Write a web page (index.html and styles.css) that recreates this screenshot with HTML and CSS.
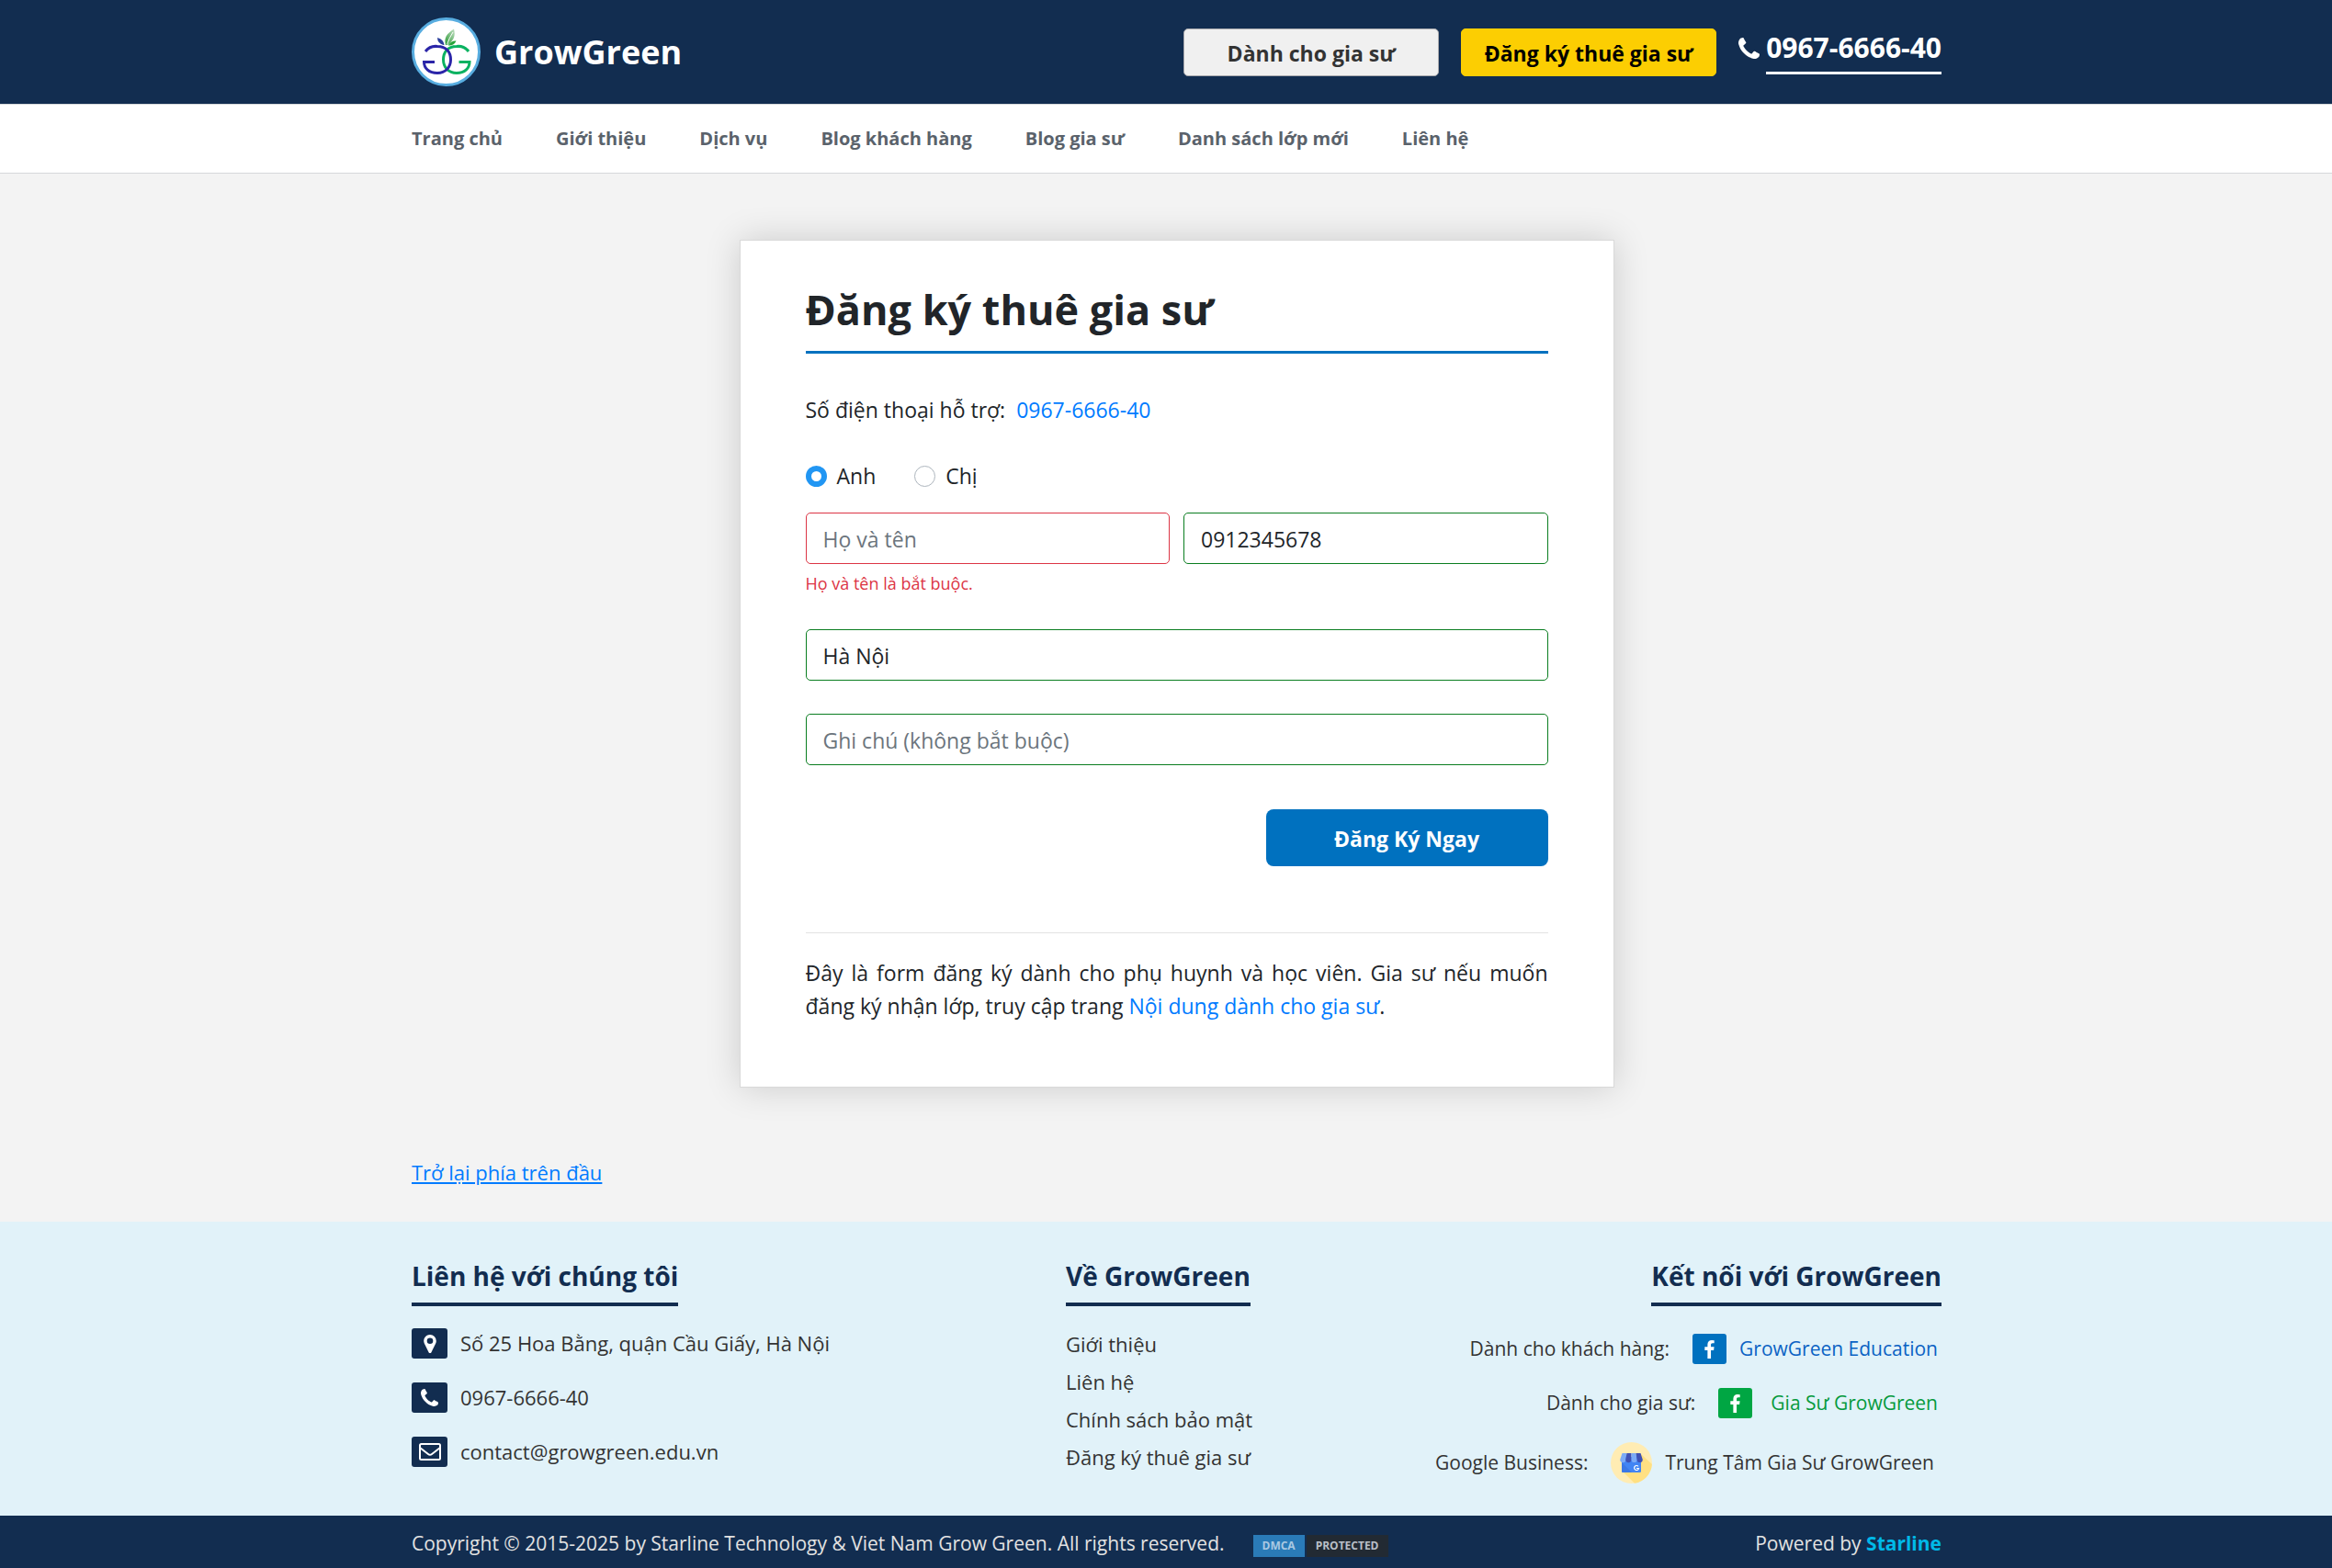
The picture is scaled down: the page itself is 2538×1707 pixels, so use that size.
FILE: index.html
```html
<!DOCTYPE html>
<html lang="vi">
<head>
<meta charset="utf-8">
<meta name="viewport" content="width=device-width, initial-scale=1">
<title>Đăng ký thuê gia sư - GrowGreen</title>
<link rel="stylesheet" href="styles.css">
</head>
<body id="top">
<svg class="sprite" aria-hidden="true">
  <symbol id="i-phone" viewBox="0 0 1408 1408"><path d="M1408 1112q0 27-10 70.500t-21 68.500q-21 50-122 106-94 51-186 51-27 0-53-3.500t-57.500-12.500-47-14.500-55.500-20.500-49-18q-98-35-175-83-127-79-264-216t-216-264q-48-77-83-175-3-9-18-49t-20.500-55.500-14.500-47-12.500-57.500-3.500-53q0-92 51-186 56-101 106-122 25-11 68.500-21t70.500-10q14 0 21 3 18 6 53 76 11 19 30 54t35 63.500 31 53.500q3 4 17.500 25t21.500 35.500 7 28.500q0 20-28.500 50t-62 55-62 53-28.500 46q0 9 5 22.500t8.500 20.500 14 24 11.500 19q76 137 174 235t235 174q2 1 19 11.500t24 14 20.500 8.500 22.500 5q18 0 46-28.500t53-62 55-62 50-28.500q14 0 28.500 7t35.500 21.500 25 17.500q25 15 53.500 31t63.500 35 54 30q70 35 76 53 3 7 3 21z"/></symbol>
  <symbol id="i-fb" viewBox="0 0 864 1664"><path d="M864 12v264H707q-86 0-116 36t-30 108v189h293l-39 296H561v759H255V905H0V609h255V391q0-186 104-288.500T636 0q147 0 228 12z"/></symbol>
</svg>

<header class="topbar">
  <div class="container topbar-row">
    <a class="brand" href="#">
      <svg class="logo" viewBox="0 0 75 75" aria-hidden="true">
        <defs><linearGradient id="leaf" x1="0" y1="1" x2="1" y2="0"><stop offset="0" stop-color="#2a9a35"/><stop offset="1" stop-color="#c4dfc5"/></linearGradient></defs>
        <circle cx="37.500" cy="37.500" r="36" fill="#fff" stroke="#58ade0" stroke-width="3"/>
        <g fill="none" stroke-width="3">
          <path d="M62 37A14.500 15 0 0 0 49 31.500C39 31.500 34.500 38 34.500 46S40 60.500 49 60.500C57.500 60.500 63 55.500 63 48.500H51.500" stroke="#0bb261"/>
          <path d="M15 37A14.500 15 0 0 1 28 31.500C38 31.500 42.500 38 42.500 46S37 60.500 28 60.500C19 60.500 13.500 55.500 13.500 48.500H25" stroke="#2b25a8"/>
        </g>
        <path d="M37 30C35 22 38 18 46 12.500C48 20 46 25 39 30Z" fill="url(#leaf)"/>
        <path d="M38.500 29.500Q41 22 45 16" fill="none" stroke="#fff"/>
        <path d="M34.500 30Q28 28 28 22Q35 24 35.500 30Z" fill="#2b3f9c"/>
        <path d="M40 30Q43 25 48.500 25.500Q46 31 40 30.500Z" fill="#27a43a"/>
      </svg>
      <span>GrowGreen</span>
    </a>
    <div class="actions">
      <a class="btn btn-light" href="#">Dành cho gia sư</a>
      <a class="btn btn-yellow" href="#">Đăng ký thuê gia sư</a>
      <div class="hotline">
        <svg class="hotline-icon" aria-hidden="true"><use href="#i-phone"/></svg>
        <a href="tel:0967666640">0967-6666-40</a>
      </div>
    </div>
  </div>
</header>

<nav class="mainnav" aria-label="Menu chính">
  <div class="container">
    <ul>
      <li><a href="#">Trang chủ</a></li>
      <li><a href="#">Giới thiệu</a></li>
      <li><a href="#">Dịch vụ</a></li>
      <li><a href="#">Blog khách hàng</a></li>
      <li><a href="#">Blog gia sư</a></li>
      <li><a href="#">Danh sách lớp mới</a></li>
      <li><a href="#">Liên hệ</a></li>
    </ul>
  </div>
</nav>

<main>
  <div class="container">
    <section class="card">
      <h1>Đăng ký thuê gia sư</h1>
      <p class="support">Số điện thoại hỗ trợ: <a href="tel:0967666640">0967-6666-40</a></p>
      <form novalidate>
        <div class="radios">
          <label><input type="radio" name="title" value="anh" checked> Anh</label>
          <label><input type="radio" name="title" value="chi"> Chị</label>
        </div>
        <div class="pair">
          <div>
            <input class="field invalid" type="text" placeholder="Họ và tên" aria-label="Họ và tên" aria-describedby="name-error">
            <p class="error" id="name-error">Họ và tên là bắt buộc.</p>
          </div>
          <div>
            <input class="field" type="tel" value="0912345678" aria-label="Số điện thoại">
          </div>
        </div>
        <input class="field" type="text" value="Hà Nội" aria-label="Địa chỉ">
        <input class="field" type="text" placeholder="Ghi chú (không bắt buộc)" aria-label="Ghi chú">
        <button class="submit" type="submit">Đăng Ký Ngay</button>
      </form>
      <p class="note">Đây là form đăng ký dành cho phụ huynh và học viên. Gia sư nếu muốn đăng ký nhận lớp, truy cập trang <a href="#">Nội dung dành cho gia sư</a>.</p>
    </section>
    <p class="backtop"><a href="#top">Trở lại phía trên đầu</a></p>
  </div>
</main>

<footer>
  <div class="footer-main">
    <div class="container footer-grid">
      <section>
        <h2>Liên hệ với chúng tôi</h2>
        <ul class="contact">
          <li><span class="tile"><svg width="14" height="20" viewBox="0 0 14 20" aria-hidden="true"><path fill="currentColor" fill-rule="evenodd" d="M7 0a6.800 6.800 0 0 1 6.800 6.800c0 1-.2 1.900-.6 2.700L8.400 19.200a1.500 1.500 0 0 1-2.800 0L.8 9.500A6.800 6.800 0 0 1 7 0zm0 3.500a3.300 3.300 0 1 0 0 6.600 3.300 3.300 0 0 0 0-6.600z"/></svg></span>Số 25 Hoa Bằng, quận Cầu Giấy, Hà Nội</li>
          <li><span class="tile"><svg width="19" height="19" aria-hidden="true"><use href="#i-phone"/></svg></span>0967-6666-40</li>
          <li><span class="tile"><svg width="24" height="19" viewBox="0 0 24 19" fill="none" stroke="currentColor" stroke-width="2" aria-hidden="true"><rect x="1" y="1" width="22" height="17" rx="1.500"/><path d="M1 5L10 12Q12 13.500 14 12L23 5"/></svg></span>contact@growgreen.edu.vn</li>
        </ul>
      </section>
      <section>
        <h2>Về GrowGreen</h2>
        <ul class="links">
          <li><a href="#">Giới thiệu</a></li>
          <li><a href="#">Liên hệ</a></li>
          <li><a href="#">Chính sách bảo mật</a></li>
          <li><a href="#">Đăng ký thuê gia sư</a></li>
        </ul>
      </section>
      <section class="connect">
        <h2>Kết nối với GrowGreen</h2>
        <ul class="social">
          <li>Dành cho khách hàng: <a class="blue" href="#"><span class="tile"><svg width="11" height="20" aria-hidden="true"><use href="#i-fb"/></svg></span>GrowGreen Education</a></li>
          <li>Dành cho gia sư: <a class="green" href="#"><span class="tile"><svg width="11" height="20" aria-hidden="true"><use href="#i-fb"/></svg></span>Gia Sư GrowGreen</a></li>
          <li>Google Business: <a class="plain" href="#"><svg class="gmb" viewBox="0 0 45 45" aria-hidden="true">
            <circle cx="22.500" cy="22.500" r="22.500" fill="#ffecb3"/>
            <path d="M33 13L44.900 24A22.500 22.500 0 0 1 26 44.700L12 31Z" fill="#ffe082"/>
            <rect x="12" y="16" width="21" height="17" rx="1.500" fill="#4285f4"/>
            <path d="M12 22L23 33H13.500Q12 33 12 31.500Z" fill="#3b78e7"/>
            <path d="M12.500 12H17.500L16.500 19a3 3 0 0 1-6.300 0z" fill="#7baaf7"/>
            <path d="M17.500 12H22.500V19a3 3 0 0 1-6.300 0z" fill="#3f51b5"/>
            <path d="M22.500 12H27.500L28.700 19a3 3 0 0 1-6.200 0z" fill="#7baaf7"/>
            <path d="M27.500 12H32.500L34.800 19a3 3 0 0 1-6.200 0z" fill="#3f51b5"/>
            <path d="M30 26.300a2.500 2.500 0 1 0 .6 2.200H28" fill="none" stroke="#fff" stroke-width="1.200"/>
          </svg>Trung Tâm Gia Sư GrowGreen</a></li>
        </ul>
      </section>
    </div>
  </div>
  <div class="footer-bottom">
    <div class="container bottom-row">
      <span>Copyright © 2015-2025 by Starline Technology &amp; Viet Nam Grow Green. All rights reserved.</span>
      <a class="dmca" href="#"><span>DMCA</span><span>PROTECTED</span></a>
      <span class="powered">Powered by <a href="#">Starline</a></span>
    </div>
  </div>
</footer>
</body>
</html>
```
FILE: styles.css
```css
:root {
  --navy: #122d50;
  --blue: #0071bf;
  --link: #007bff;
}

* { box-sizing: border-box; }

body {
  margin: 0;
  background: #f3f3f3;
  color: #212529;
  font: 23px/36px "Open Sans", "Noto Sans", sans-serif;
}

h1, h2, p, ul { margin: 0; padding: 0; }
ul { list-style: none; }
a { color: var(--link); text-decoration: none; }
svg { display: block; flex: none; }
use { fill: currentColor; }
.sprite { position: absolute; width: 0; height: 0; }

.topbar, .mainnav, main, .footer-main, .footer-bottom { padding-left: 23px; }

.container {
  width: 100%;
  max-width: 1665px;
  margin: 0 auto;
}

/* Header */
.topbar { background: var(--navy); }

.topbar-row {
  display: flex;
  align-items: center;
  justify-content: space-between;
  min-height: 113px;
}

.brand {
  display: flex;
  align-items: center;
  gap: 15px;
  color: #fff;
  font-size: 36px;
  font-weight: 700;
}

.logo { width: 75px; height: 75px; }

.actions {
  display: flex;
  align-items: center;
  gap: 24px;
}

.btn {
  width: 278px;
  height: 52px;
  border: 1px solid #a9a9ad;
  border-radius: 5px;
  font-weight: 700;
  line-height: 52px;
  text-align: center;
}

.btn-light { background: #f0f0f0; color: #333; }
.btn-yellow { background: #fcce02; border-color: #fcce02; color: #000; }

.hotline {
  display: flex;
  gap: 7px;
  padding-top: 2px;
  color: #fff;
  font-size: 30px;
  font-weight: 700;
}

.hotline-icon { width: 23px; height: 23px; margin-top: 7px; }

.hotline a {
  padding-bottom: 8px;
  border-bottom: 3px solid #fff;
  color: inherit;
}

.mainnav {
  border: solid #d6d8da;
  border-width: 1px 0;
  background: #fff;
}

.mainnav ul { display: flex; gap: 58px; }

.mainnav a {
  display: block;
  color: #5a626b;
  font-size: 20px;
  font-weight: 700;
  line-height: 74px;
}

/* Registration card */
.card {
  max-width: 952px;
  margin: 72px auto 0;
  padding: 43px 71px 70px;
  border: 1px solid #d9d9d9;
  background: #fff;
  box-shadow: 0 0 36px rgba(0, 0, 0, .16);
}

h1 {
  padding-bottom: 13px;
  border-bottom: 3px solid var(--blue);
  font-size: 45px;
  line-height: 64px;
}

.support { margin-top: 43px; }
.support a { margin-left: 6px; }

.radios {
  display: flex;
  gap: 42px;
  margin-top: 36px;
}

.radios label {
  display: flex;
  align-items: center;
  gap: 11px;
}

.radios input {
  width: 23px;
  height: 23px;
  margin: 0;
  appearance: none;
  border: 1px solid #adb5bd;
  border-radius: 50%;
  background: #fff;
}

.radios input:checked { border: 6px solid #2196f3; }

.pair {
  display: grid;
  grid-template-columns: 1fr 1fr;
  gap: 15px;
  margin-top: 22px;
}

.field {
  display: block;
  width: 100%;
  height: 56px;
  padding: 2px 18px 0;
  border: 1px solid #0a7d20;
  border-radius: 5px;
  background: #fff;
  color: #212529;
  font: inherit;
}

.field.invalid { border-color: #dc3545; }
.field::placeholder { color: #6c757d; opacity: 1; }
form > .field { margin-top: 36px; }

.error {
  margin-top: 8px;
  color: #dc3545;
  font-size: 18px;
  line-height: 27px;
}

.submit {
  display: block;
  width: 307px;
  height: 62px;
  margin: 48px 0 0 auto;
  padding-top: 3px;
  border: 0;
  border-radius: 8px;
  background: var(--blue);
  color: #fff;
  font: inherit;
  font-weight: 700;
}

.note {
  margin-top: 72px;
  padding-top: 25px;
  border-top: 1px solid #e3e3e3;
  text-align: justify;
}

.backtop { padding: 74px 0 36px; font-size: 22px; }
.backtop a { text-decoration: underline; }

/* Footer */
.footer-main {
  padding-top: 38px;
  padding-bottom: 35px;
  background: #e1f2f9;
  color: #333;
  font-size: 22px;
  line-height: 33px;
}

.footer-grid {
  display: grid;
  grid-template-columns: 712fr 300fr 653fr;
}

.footer-grid h2 {
  width: fit-content;
  padding-bottom: 8px;
  border-bottom: 4px solid var(--navy);
  color: var(--navy);
  font-size: 28px;
  line-height: 42px;
}

.contact, .social {
  display: flex;
  flex-direction: column;
  gap: 26px;
}

.contact { margin-top: 24px; }

.contact li {
  display: flex;
  align-items: center;
  gap: 14px;
  height: 33px;
}

.tile {
  display: grid;
  place-items: center;
  width: 39px;
  height: 33px;
  border-radius: 3px;
  background: var(--navy);
  color: #fff;
}

.links { margin-top: 21px; }
.links li { line-height: 41px; }
.links a, .plain { color: #333; }

.connect {
  display: flex;
  flex-direction: column;
  align-items: flex-end;
}

.social {
  align-items: flex-end;
  margin-top: 30px;
  font-size: 21px;
}

.social li, .social a {
  display: flex;
  align-items: center;
}

.social li { gap: 25px; min-height: 33px; padding-right: 4px; }
.social a { gap: 14px; }
.social .tile { width: 37px; }
.blue { color: #0b62c4; }
.blue .tile { background: var(--blue); }
.social .green { gap: 20px; color: #069a3d; }
.green .tile { background: #00a643; }
.social .plain { padding-right: 4px; }
.gmb { width: 45px; height: 45px; }

.footer-bottom {
  background: var(--navy);
  color: #e2e2e2;
  font-size: 21px;
}

.bottom-row {
  display: flex;
  align-items: center;
  min-height: 59px;
}

.dmca {
  display: flex;
  gap: 2px;
  margin: 6px 0 0 31px;
  color: #b8bfc7;
  font-size: 12px;
  font-weight: 700;
  line-height: 24px;
}

.dmca span { padding: 0 10px; background: #222a33; }
.dmca span:first-child { background: #2a7bb8; color: #a9c9e2; }

.powered { margin-left: auto; }
.powered a { color: #00b9e8; font-weight: 700; }
```
